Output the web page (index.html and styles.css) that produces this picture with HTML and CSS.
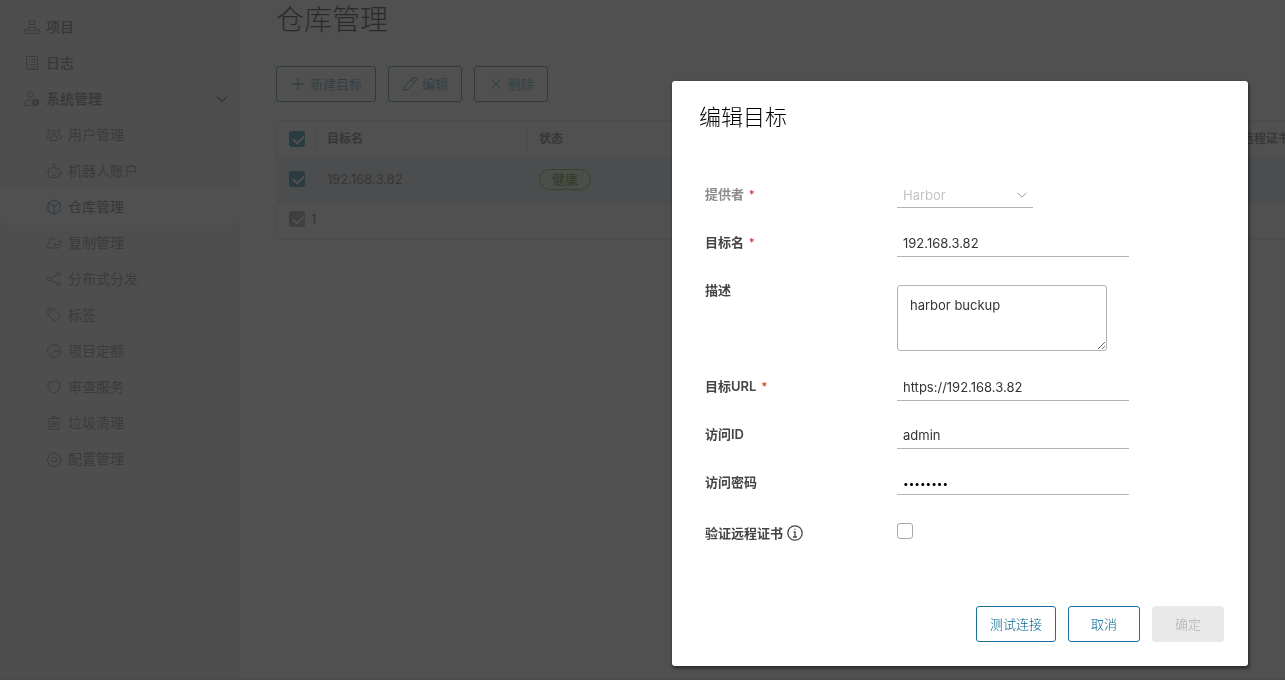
FILE: index.html
```html
<!DOCTYPE html>
<html lang="zh-CN">
<head>
<meta charset="utf-8">
<title>仓库管理</title>
<link rel="stylesheet" href="styles.css">
</head>
<body>
<div class="app">
  <nav class="sidebar">
    <a class="nav-item top" href="#"><svg class="icon" viewBox="0 0 16 16"><path d="M5.500 1.500h5v4h-5zM1 10.500h5v4H1zM10 10.500h5v4h-5zM3.500 8.500h9"/></svg>项目</a>
    <a class="nav-item top" href="#"><svg class="icon" viewBox="0 0 16 16"><path d="M2.500 1.500h11v13h-11zM4.500 4.500h1M7 4.500h4.500M4.500 7h1M7 7h4.500M4.500 9.500h1M7 9.500h4.500M4.500 12h1M7 12h4.500"/></svg>日志</a>
    <a class="nav-item top" href="#"><svg class="icon" viewBox="0 0 16 16"><circle cx="6.500" cy="3.500" r="2.700"/><path d="M7 14.500H1V12q2-3.500 6-3.500"/><circle cx="11.500" cy="11.500" r="2.300" stroke-width="2.200"/><path d="M11.500 7.500v1.500M11.500 14v1.500M7.500 11.500H9M14 11.500h1.500M8.700 8.700l1 1M13.300 13.300l1 1M14.300 8.700l-1 1M9.700 13.300l-1 1" stroke-width="1.500"/></svg>系统管理<svg class="chevron" viewBox="0 0 16 16"><path d="M3 5.500l5 5 5-5"/></svg></a>
    <a class="nav-item" href="#"><svg class="icon" viewBox="0 0 16 16"><circle cx="8" cy="5" r="2"/><path d="M4.500 13.500V11Q5 8.500 8 8.500t3.500 2.500v2.500zM5 4.500Q4.500 1.500 2.500 2.500T4 6.500M3 11.500H1V9q.5-1.500 3-2M11 4.500q.5-3 2.500-2T12 6.500M13 11.500h2V9q-.5-1.500-3-2"/></svg>用户管理</a>
    <a class="nav-item" href="#"><svg class="icon" viewBox="0 0 16 16"><rect x="2.500" y="5" width="11" height="9.500" rx="3"/><path d="M8 5V2.500M.5 8.500v3M15.500 8.500v3M5.500 8.500v1M10.500 8.500v1M6 12h4"/><circle cx="8" cy="1.500" r="1"/></svg>机器人账户</a>
    <a class="nav-item active" href="#"><svg class="icon" viewBox="0 0 16 16"><path d="M8 1l6 3v8l-6 3-6-3V4zM2 4l6 3 6-3M8 7v8"/></svg>仓库管理</a>
    <a class="nav-item" href="#"><svg class="icon" viewBox="0 0 16 16"><path d="M14 10v1.500q-.5 1.500-2 1.500H3Q.5 12.500.5 10.500T3 8q0-4.500 4-5 2.500 0 4 2M8.500 9.500H14M10 8L8.500 9.500 10 11M11.500 6.500h4M14 5l1.500 1.500L14 8"/></svg>复制管理</a>
    <a class="nav-item" href="#"><svg class="icon" viewBox="0 0 16 16"><circle cx="3" cy="8" r="1.800"/><circle cx="12.500" cy="3" r="1.800"/><circle cx="12.500" cy="13" r="1.800"/><path d="M4.700 7.200L10.800 4M4.700 8.800l6.100 3.300"/></svg>分布式分发</a>
    <a class="nav-item" href="#"><svg class="icon" viewBox="0 0 16 16"><path d="M2 2h6l6.500 7-5.500 5.500L2 8z"/><circle cx="4.700" cy="4.700" r=".5"/></svg>标签</a>
    <a class="nav-item" href="#"><svg class="icon" viewBox="0 0 16 16"><circle cx="8" cy="8" r="6.500"/><path d="M3.500 12.500L8 8h6.500"/></svg>项目定额</a>
    <a class="nav-item" href="#"><svg class="icon" viewBox="0 0 16 16"><path d="M8 1.500q3 2 6 2v5.500q-1 4-6 5.500Q3 13 2 9V3.500q3 0 6-2z"/></svg>审查服务</a>
    <a class="nav-item" href="#"><svg class="icon" viewBox="0 0 16 16"><path d="M1.500 3.500h13M6 3V1.500h4V3M3 5v9.500h10V5M6 6v6.500M8 6v6.500M10 6v6.500"/></svg>垃圾清理</a>
    <a class="nav-item" href="#"><svg class="icon" viewBox="0 0 16 16"><path d="M6.800 1.500h2.400l.5 1.700 1.300.6 1.700-.9 1.500 1.600-.9 1.700.5 1.200 1.200.5v2l-1.200.5-.5 1.300.8 1.600-1.600 1.500-1.600-.8-1.300.5-.5 1.500H6.900l-.5-1.500-1.300-.5-1.600.8-1.600-1.500.8-1.600-.5-1.300L1 9.900v-2l1.200-.5.5-1.200-.9-1.700 1.500-1.600 1.700.9 1.300-.6z"/><circle cx="8" cy="8.500" r="2.500"/></svg>配置管理</a>
  </nav>

  <main class="content">
    <h1 class="page-title">仓库管理</h1>
    <div class="toolbar">
      <button class="btn tool" type="button"><svg class="icon" viewBox="0 0 16 16"><path d="M8 2v12M2 8h12"/></svg>新建目标</button>
      <button class="btn tool" type="button"><svg class="icon" viewBox="0 0 16 16"><path d="M1.500 14.500l1-4L11 2q1.500-1 2.500 0l.5.500q1 1 0 2.500l-8.500 8.500zM9.500 3.500l3 3"/></svg>编辑</button>
      <button class="btn tool" type="button"><svg class="icon" viewBox="0 0 16 16"><path d="M3.500 3.500l9 9M12.500 3.500l-9 9"/></svg>删除</button>
    </div>
    <div class="grid">
      <table class="targets">
        <colgroup><col class="col-check"><col class="col-name"><col><col class="col-cert"></colgroup>
        <thead>
          <tr>
            <th><input class="check" type="checkbox" aria-label="全选" checked></th>
            <th><span class="divided">目标名</span></th>
            <th><span class="divided">状态</span></th>
            <th>验证远程证书</th>
          </tr>
        </thead>
        <tbody>
          <tr>
            <td><input class="check" type="checkbox" aria-label="192.168.3.82" checked></td>
            <td><span class="divided">192.168.3.82</span></td>
            <td><span class="status">健康</span></td>
            <td></td>
          </tr>
        </tbody>
      </table>
      <label class="grid-foot"><input class="check muted" type="checkbox" checked disabled>1</label>
    </div>
  </main>
</div>

<div class="backdrop">
  <form class="modal" role="dialog" aria-labelledby="dialog-title">
    <h2 class="modal-title" id="dialog-title">编辑目标</h2>
    <div class="fields">
      <div class="field disabled">
        <label for="provider">提供者<span class="required">*</span></label>
        <div class="select-wrap">
          <select class="control" id="provider" disabled><option>Harbor</option></select>
          <svg class="caret" viewBox="0 0 16 16"><path d="M3 5.500l5 5 5-5"/></svg>
        </div>
      </div>
      <div class="field">
        <label for="name">目标名<span class="required">*</span></label>
        <input class="control" id="name" type="text" value="192.168.3.82">
      </div>
      <div class="field tall">
        <label for="description">描述</label>
        <textarea class="description" id="description">harbor buckup</textarea>
      </div>
      <div class="field">
        <label for="url">目标URL<span class="required">*</span></label>
        <input class="control" id="url" type="text" value="https://192.168.3.82">
      </div>
      <div class="field">
        <label for="access-id">访问ID</label>
        <input class="control" id="access-id" type="text" value="admin">
      </div>
      <div class="field">
        <label for="password">访问密码</label>
        <input class="control password" id="password" type="password" value="password">
      </div>
      <div class="field last">
        <label for="verify">验证远程证书<svg class="info" viewBox="0 0 16 16"><circle cx="8" cy="8" r="7.200"/><path d="M6.500 7H8v5M6 12h4M7.500 4.300h1"/></svg></label>
        <input class="check" id="verify" type="checkbox">
      </div>
    </div>
    <div class="actions">
      <button class="btn" type="button">测试连接</button>
      <button class="btn" type="button">取消</button>
      <button class="btn" type="submit" disabled>确定</button>
    </div>
  </form>
</div>
</body>
</html>
```

FILE: styles.css
```css
* { box-sizing: border-box; }

body {
  margin: 0;
  overflow: hidden;
  background: #fafafa;
  color: #565656;
  font: 13px/24px Inter, "Noto Sans CJK SC", sans-serif;
}

svg { fill: none; stroke: currentColor; }

.app { display: flex; min-height: 100vh; border-bottom: 2px solid #e4d8dc; }

.sidebar { flex: 0 0 240px; padding-top: 9px; background: #eee; }

.nav-item {
  display: flex;
  align-items: center;
  gap: 6px;
  height: 36px;
  padding-left: 46px;
  border-radius: 4px;
  color: #737373;
  font-size: 14px;
  text-decoration: none;
}
.nav-item.top { padding: 0 10px 0 24px; color: #565656; font-weight: 500; }
.nav-item.top .icon { color: #737373; }
.nav-item.active { background: #fafafa; color: #565656; }
.nav-item.active .icon { color: #0072a3; }

.icon { width: 16px; height: 16px; }
.chevron { width: 16px; height: 16px; margin-left: auto; stroke-width: 1.3; }

.content { flex: 1; min-width: 0; overflow: hidden; padding: 2px 0 0 36px; }

.page-title { margin: 0; color: #000; font-size: 28px; font-weight: 300; line-height: 36px; }

.toolbar { display: flex; gap: 12px; padding: 28px 0 18px; }

.btn {
  min-width: 72px;
  height: 36px;
  padding: 0 13px;
  border: 1px solid #1a6f9e;
  border-radius: 3px;
  background: transparent;
  color: #00628f;
  font: inherit;
  font-weight: 300;
}
.btn:disabled { border-color: #e9e9e9; background: #e9e9e9; color: #b0b0b0; }
.btn.tool { display: flex; align-items: center; gap: 4px; }

.grid { width: calc(100% + 40px); border: 1px solid #ddd; border-radius: 3px; }

.targets { width: 100%; border-collapse: collapse; table-layout: fixed; }
.col-check { width: 38px; }
.col-name { width: 212px; }
.col-cert { width: 106px; }
.targets th, .targets td { height: 36px; padding: 0; text-align: left; }
.targets th { font-size: 12px; font-weight: 700; }
.targets td { height: 45px; border: solid #ddd; border-width: 1px 0 2px; }
.targets tbody tr { background: #dde7f0; }
.divided { display: block; padding-left: 11px; border-left: 1px solid #ddd; }
.targets .check { margin-left: 12px; }

.status {
  display: inline-block;
  margin-left: 12px;
  padding: 0 12px;
  border: 1px solid #5aa220;
  border-radius: 11px;
  background: #dff0d0;
  color: #266900;
  line-height: 19px;
}

.grid-foot { display: flex; gap: 6px; height: 36px; padding: 8px 12px; line-height: 16px; }

.check {
  appearance: none;
  display: block;
  width: 16px;
  height: 16px;
  margin: 0;
  border: 1px solid #a8a8a8;
  border-radius: 3px;
}
.check:checked { border: 0; background: #0072a3; }
.check:checked::after {
  content: "";
  display: block;
  width: 9px;
  height: 5px;
  margin: 4px;
  border: solid #fff;
  border-width: 0 0 2px 2px;
  transform: rotate(-45deg);
}
.check.muted:checked { background: #8c8c8c; }

.backdrop {
  position: fixed;
  inset: 0;
  display: flex;
  align-items: flex-start;
  justify-content: flex-end;
  padding: 81px 37px 0 0;
  background: rgba(49, 49, 49, .85);
}

.modal {
  width: 576px;
  padding: 24px;
  border-radius: 3px;
  background: #fff;
  box-shadow: 1px 2px 3px 1px rgba(0, 0, 0, .4);
}
.modal-title { margin: 0 0 41px; padding-left: 3px; color: #000; font-size: 22px; font-weight: 300; line-height: 24px; }

.fields { padding-left: 9px; color: #333; }
.field {
  display: grid;
  grid-template-columns: 192px 1fr;
  align-items: start;
  justify-items: start;
  min-height: 48px;
  padding-top: 15px;
}
.field label { display: flex; align-items: center; margin-top: -3px; color: #454545; font-weight: 600; }
.field.tall { min-height: 96px; padding-top: 19px; }
.field.tall label { margin-top: -7px; }
.field.last { min-height: 54px; padding-top: 17px; }
.field.last label { margin-top: -2px; }
.field.disabled label { color: #8c8c8c; }
.required { margin-left: 5px; color: #c92100; font-size: 11px; font-weight: 400; }
.info { width: 16px; height: 16px; margin-left: 4px; stroke-width: 1.3; }

.control {
  display: block;
  width: 232px;
  height: 24px;
  padding: 0 6px 3px;
  border: 0;
  border-bottom: 1px solid #b3b3b3;
  border-radius: 0;
  outline: 0;
  background: transparent;
  color: inherit;
  font: inherit;
}
.password { height: 22px; padding-bottom: 2px; color: #000; font-size: 10px; }

.select-wrap { display: grid; width: 136px; align-items: center; }
.select-wrap > * { grid-area: 1 / 1; }
.select-wrap .control { width: 100%; height: 23px; appearance: none; color: #c4c4c4; line-height: 20px; opacity: 1; }
.caret { width: 14px; height: 14px; margin: 0 4px 3px 0; justify-self: end; color: #8c8c8c; pointer-events: none; }

.description {
  width: 210px;
  height: 66px;
  padding: 7px 12px;
  border: 1px solid #b3b3b3;
  border-radius: 3px;
  outline: 0;
  background: #fff;
  color: inherit;
  font: inherit;
}

.actions { display: flex; justify-content: flex-end; gap: 12px; padding-top: 46px; }
```
